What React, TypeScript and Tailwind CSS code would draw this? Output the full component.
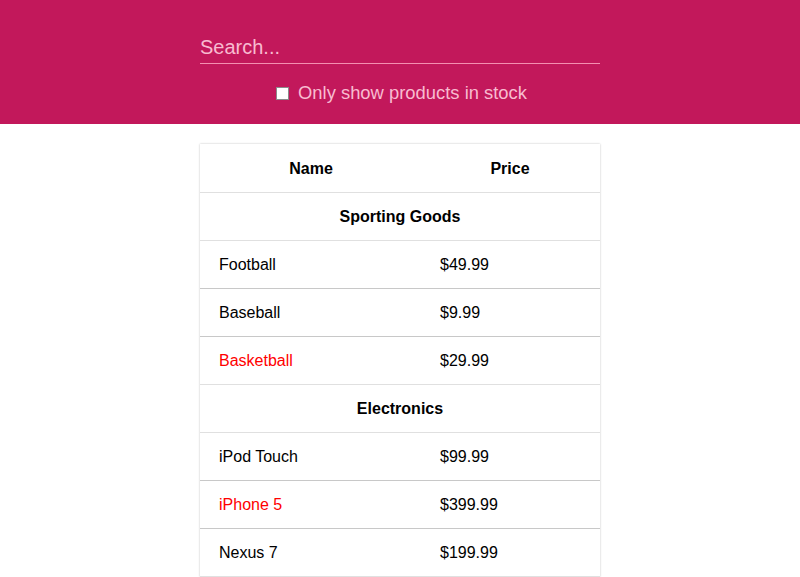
import React from "react";

const products = [
  { category: "Sporting Goods", items: [
    { name: "Football", price: "$49.99", stocked: true },
    { name: "Baseball", price: "$9.99", stocked: true },
    { name: "Basketball", price: "$29.99", stocked: false },
  ]},
  { category: "Electronics", items: [
    { name: "iPod Touch", price: "$99.99", stocked: true },
    { name: "iPhone 5", price: "$399.99", stocked: false },
    { name: "Nexus 7", price: "$199.99", stocked: true },
  ]},
];

export default function App() {
  return (
    <div className="min-h-[577px] bg-white" style={{ fontFamily: '"Liberation Sans", Arial, sans-serif' }}>
      <div className="h-[124px] bg-[#c2185b] flex flex-col items-center pt-[32px]">
        <div className="w-[400px] border-b border-[#f48fb1] h-[32px] flex items-start">
          <input
            placeholder="Search..."
            className="w-full bg-transparent outline-none text-[20px] leading-[28px] mt-[1px] text-[#f8bbd0] placeholder:text-[#f8bbd0]"
          />
        </div>
        <label className="mt-[17px] pl-[4px] flex items-center gap-[9px] text-[18.4px] text-[#f8bbd0] leading-[24px]">
          <span className="w-[13px] h-[13px] bg-white border border-[#8a8a8a] inline-block -ml-[1px]" />
          Only show products in stock
        </label>
      </div>
      <div className="flex justify-center pt-[20px]">
        <table className="w-[400px] border-collapse text-[16px] text-black shadow-[0_0_2px_rgba(0,0,0,0.25)]">
          <thead>
            <tr className="h-[48px] border-b border-[#e0e0e0]">
              <th className="w-[220px] font-bold text-center pt-[2px] pl-[2px]">Name</th>
              <th className="font-bold text-center pt-[2px]">Price</th>
            </tr>
          </thead>
          <tbody>
            {products.map((g) => (
              <React.Fragment key={g.category}>
                <tr className="h-[48px] border-b border-[#e0e0e0]">
                  <th colSpan={2} className="font-bold text-center pt-[2px]">{g.category}</th>
                </tr>
                {g.items.map((p, i) => (
                  <tr key={p.name} className={"h-[48px] " + (i < g.items.length - 1 ? "border-b border-[#c8c8c8]" : "border-b border-[#e0e0e0]")}>
                    <td className={"pl-[19px] pt-[2px] " + (p.stocked ? "text-black" : "text-[#ff0000]")}>{p.name}</td>
                    <td className="pl-[20px] pt-[2px]">{p.price}</td>
                  </tr>
                ))}
              </React.Fragment>
            ))}
          </tbody>
        </table>
      </div>
    </div>
  );
}
